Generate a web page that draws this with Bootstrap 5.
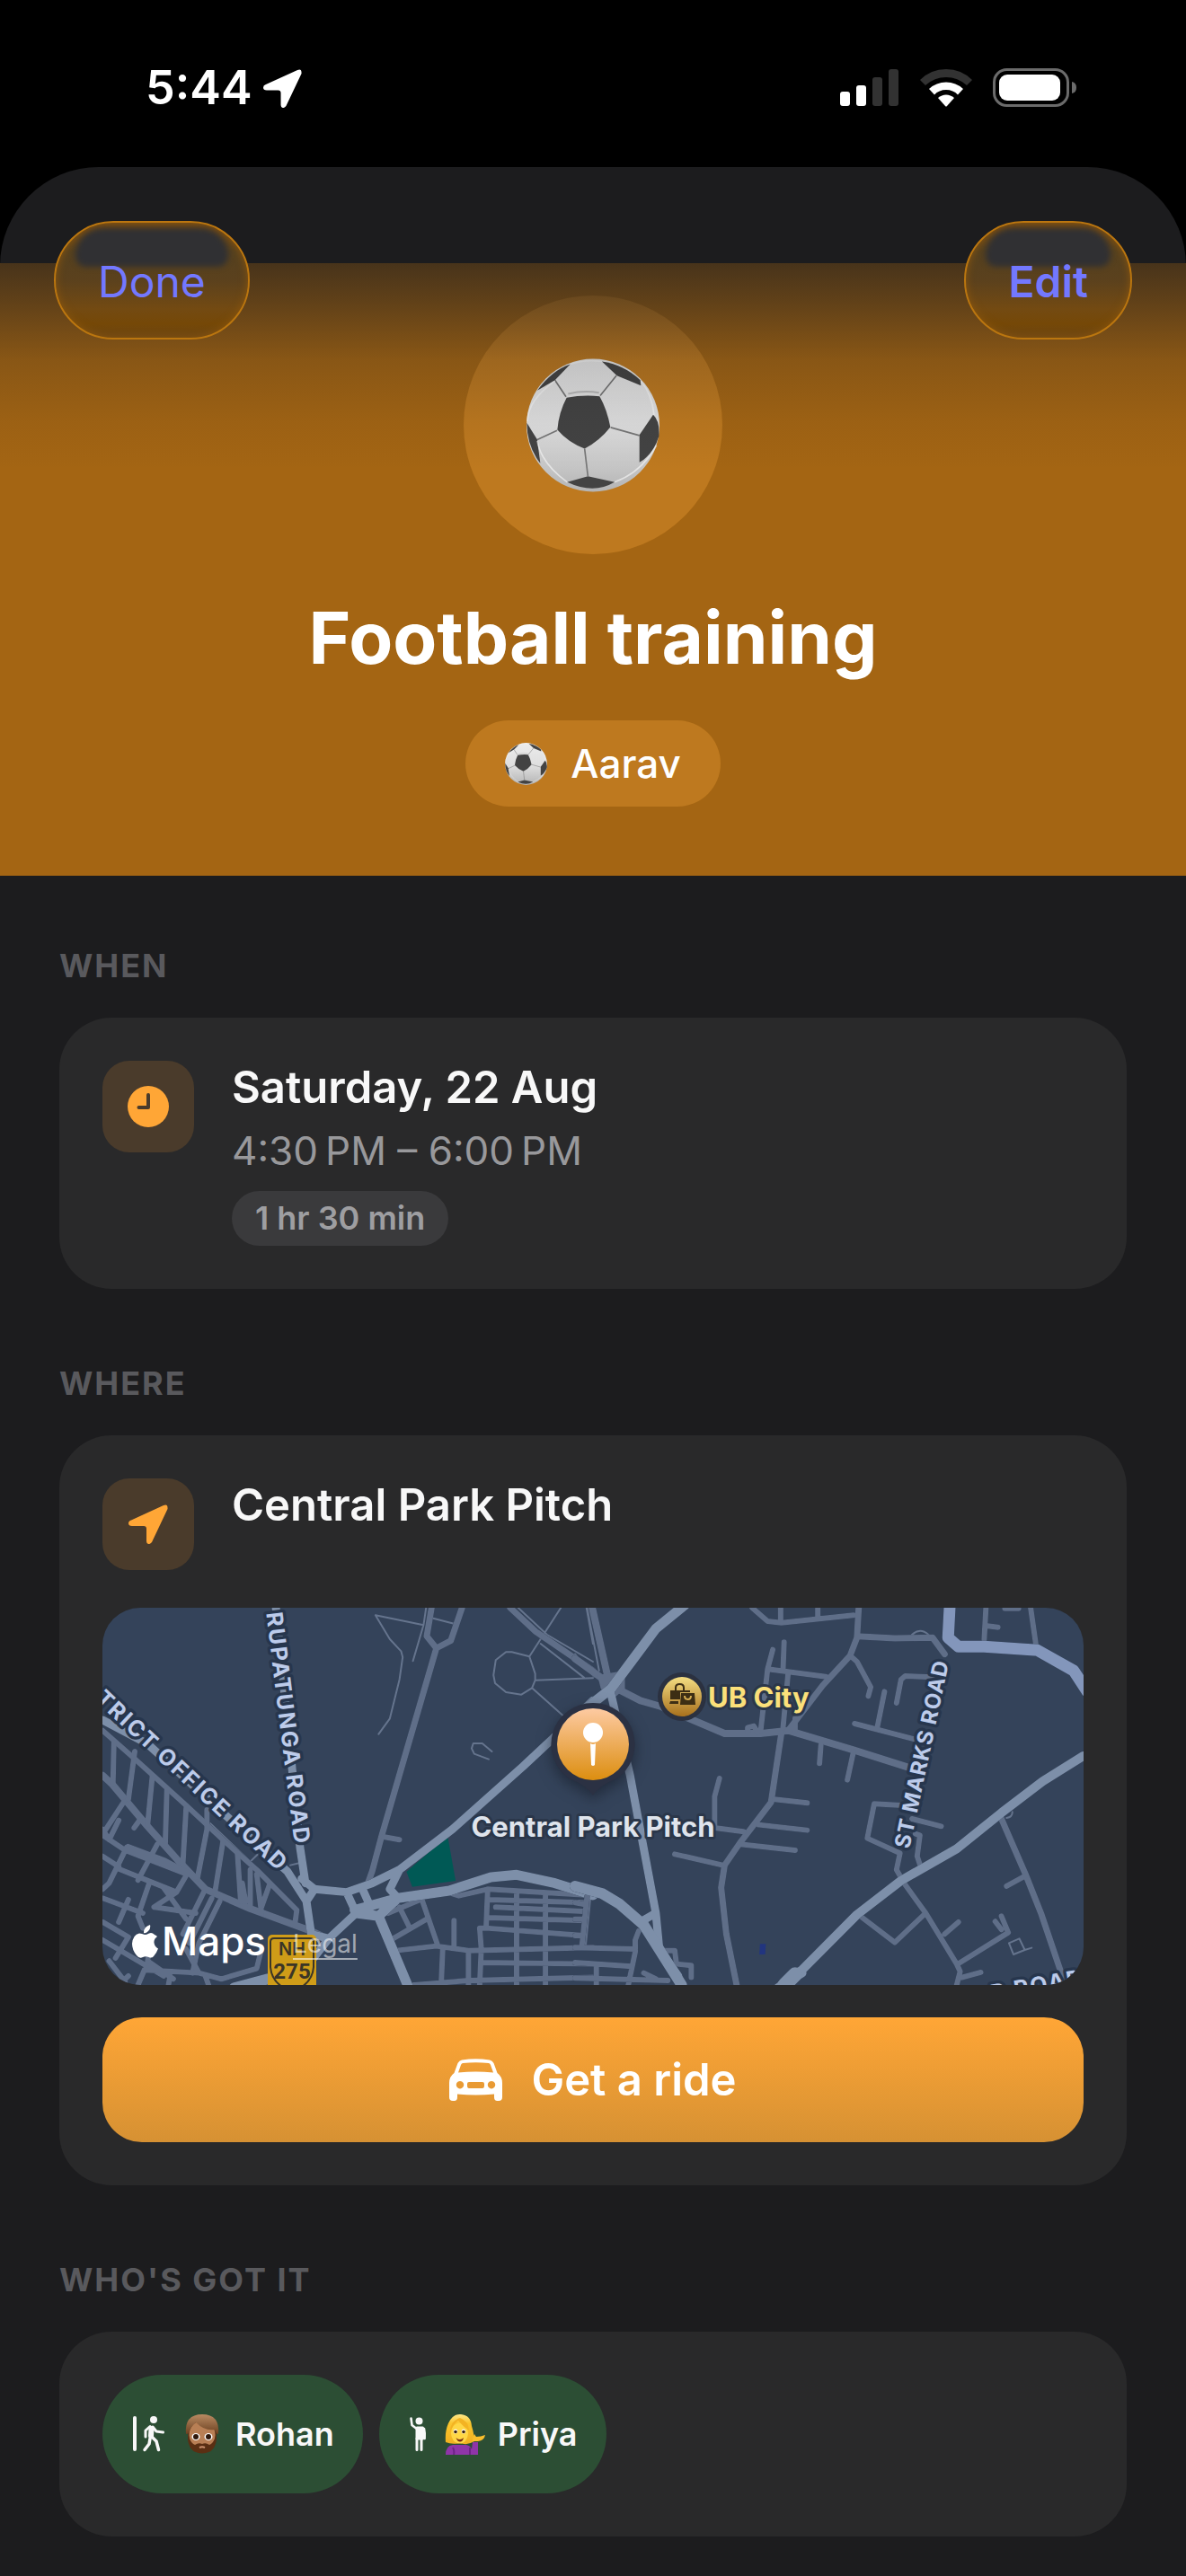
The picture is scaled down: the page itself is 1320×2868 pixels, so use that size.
<!DOCTYPE html>
<html lang="en" data-bs-theme="dark">
<head>
<meta charset="utf-8">
<meta name="viewport" content="width=device-width, initial-scale=1">
<title>Football training</title>
<link href="https://cdn.jsdelivr.net/npm/bootstrap@5.3.0/dist/css/bootstrap.min.css" rel="stylesheet">
<style>
  :root { --accent: #ffa636; --tint: #7378ff; }
  body { background: #000; font-family: Inter, "Liberation Sans", sans-serif; color: #f8f8f8; }
  svg { display: block; flex: none; }

  .status-bar { height: 186px; padding: 66px 121px 0 162px; color: #fff; }
  .status-time { font-size: 52px; line-height: 64px; font-weight: 600; gap: 12px; }
  .status-icons { height: 64px; gap: 23px; }

  .sheet { background: #1c1c1e; border-radius: 110px 110px 0 0; overflow: hidden; min-height: calc(100vh - 186px); }
  .sheet-bar { height: 107px; padding: 60px 60px 0; position: relative; z-index: 3; }
  .glass-btn { --bs-btn-color: var(--tint); --bs-btn-hover-color: var(--tint); --bs-btn-active-color: var(--tint);
    position: relative; overflow: hidden; height: 132px; padding: 18px 47px 0; display: flex; justify-content: center;
    border: 2px solid #bb760f; border-radius: 66px; font-size: 48px; line-height: 96px;
    background: linear-gradient(#6a4618 0, #54401f 25%, #5b411d 50%, #734a12 75%, #754807 88%, #6b4514 100%);
    box-shadow: inset 0 0 10px #8a560f; }
  .glass-btn::before { content: ""; position: absolute; top: 6px; left: 22px; right: 22px; height: 43px;
    background: #303033; border-radius: 36px 36px 14px 14px; filter: blur(3px); }
  .glass-btn span { position: relative; }

  .hero { position: relative; background: #a46513; padding: 36px 48px 77px; }
  .hero::after { content: ""; position: absolute; inset: 0 0 auto 0; height: 230px; pointer-events: none;
    background: linear-gradient(rgba(28,28,30,.68) 0, rgba(28,28,30,.5) 18%, rgba(28,28,30,.2) 47%, rgba(28,28,30,.06) 77%, rgba(28,28,30,0) 100%); }
  .hero-disc { width: 288px; height: 288px; background: #be791f; }
  .hero-title { font-size: 80px; line-height: 98px; font-weight: 700; color: #fff; margin: 44px 0 43px; }
  .hero-pill { height: 96px; padding: 0 44px; gap: 26px; background: #be791f; font-size: 44px; font-weight: 500; color: #fff; }

  .sheet-body { padding: 78px 66px 44px; }
  .group-label { font-size: 36px; line-height: 44px; font-weight: 700; letter-spacing: 2px; color: #59595d; margin: 0 0 36px; }
  .panel { background: #29292a; border-radius: 58px; padding: 48px; margin-bottom: 83px; }
  .panel:last-child { margin-bottom: 0; }
  .icon-tile { width: 102px; height: 102px; border-radius: 30px; background: #4a3b2b; flex: none; }
  .info-row { gap: 42px; }
  .info-title { font-size: 49px; line-height: 60px; font-weight: 600; margin: 0; }
  .info-sub { font-size: 44px; line-height: 56px; color: #98989b; margin: 12px 0 17px; }
  .time-badge { display: inline-block; height: 61px; line-height: 61px; padding: 0 26px; border-radius: 31px;
    background: #3a3a3c; color: #9e9ea1; font-size: 36px; font-weight: 600; vertical-align: top; }

  .map-box { position: relative; height: 420px; margin: 42px 0 36px; border-radius: 42px; overflow: hidden; background: #34435a; }
  .map-box > svg { width: 100%; height: 100%; }
  .map-brand { position: absolute; left: 33px; bottom: 21px; gap: 4px; color: #fff; font-size: 44px; line-height: 56px; font-weight: 500; }
  .map-legal { position: absolute; left: 212px; bottom: 26px; font-size: 28px; line-height: 40px; color: rgba(255,255,255,.55); text-underline-offset: 6px; }
  .map-legal:hover { color: #fff; }
  .streets path { fill: none; stroke-linejoin: round; stroke-linecap: round; vector-effect: non-scaling-stroke; }
  .minor path { stroke: #5f6e88; }
  .major path { stroke: #7d8fa9; }
  .trails path { stroke: #65748d; stroke-width: 2px; }
  .casing { filter: drop-shadow(0 0 1px #26344a); }
  .street-name { font-size: 25px; font-weight: 700; letter-spacing: 2px; fill: #bccbea; stroke: #27364d; stroke-width: 7px; paint-order: stroke; stroke-linejoin: round; }
  .street-name .side-street { font-size: 24px; letter-spacing: 1px; }
  .place-name { font-size: 31px; font-weight: 700; stroke: #2b374a; stroke-width: 6px; paint-order: stroke; stroke-linejoin: round; }

  .ride-btn { --bs-btn-color: #fff; --bs-btn-hover-color: #fff; --bs-btn-active-color: #fff; width: 100%; height: 139px; border: 0;
    border-radius: 44px; gap: 32px; font-size: 49px; font-weight: 600; background: linear-gradient(#ffa636, #d69133); }

  .people { gap: 18px; }
  .person { height: 132px; border-radius: 66px; background: #2c4e34; padding: 0 32px 0 34px; font-size: 36px; font-weight: 600; }
  .person-face { margin: 0 14px 0 20px; }
</style>
<script src="https://cdn.jsdelivr.net/npm/bootstrap@5.3.0/dist/js/bootstrap.bundle.min.js"></script>
</head>
<body>

<svg width="0" height="0" class="position-absolute" aria-hidden="true">
  <defs>
    <linearGradient id="leather" x1="0" y1="0" x2="0" y2="1"><stop offset="0" stop-color="#ececec"/><stop offset=".55" stop-color="#dedede"/><stop offset="1" stop-color="#b4b4b4"/></linearGradient>
    <symbol id="ball" viewBox="316 270 444 446">
      <circle cx="538" cy="493" r="222" fill="url(#leather)"/>
      <g fill="#434343">
        <path d="M450 401Q505 390 560 396Q585 440 596 499Q560 545 510 571Q455 550 419 508Q424 450 450 401Z"/>
        <path d="M462 289Q400 310 352 377L411 342Z"/>
        <path d="M568 280Q640 290 696 342L698 360L618 327Z"/>
        <path d="M739 458Q762 480 758 530Q740 590 693 617V525Z"/>
        <path d="M317 485L352 541L362 620Q318 565 317 485Z"/>
        <path d="M452 683L521 663L610 683Q540 725 452 683Z"/>
      </g>
      <path d="M411 342L448 398M562 394L616 327M597 500L693 527M510 571L521 663M418 510L352 541" fill="none" stroke="#777" stroke-width="5"/>
      <path d="M462 289Q510 272 568 280M411 345Q320 410 319 480M352 545Q365 620 452 683M610 683Q700 650 750 560M698 345Q735 390 742 458" fill="none" stroke="#fff" stroke-opacity=".55" stroke-width="5"/>
      <path d="M455 388Q505 376 558 384" fill="none" stroke="#bbb" stroke-width="6"/>
    </symbol>
    <symbol id="arrow" viewBox="0 0 44 44">
      <path d="M39 1Q44-1 43.500 5L26 42Q24 44.500 22 44Q20 43.500 20 41V27Q20 24 17 24H4Q0 24 0 21Q0 18.500 3 17.500Z"/>
    </symbol>
    <linearGradient id="pinfill" x1="0" y1="0" x2="0" y2="1"><stop offset="0" stop-color="#fdcaa2"/><stop offset="1" stop-color="#dc8e10"/></linearGradient>
    <linearGradient id="shopfill" x1="0" y1="0" x2="0" y2="1"><stop offset="0" stop-color="#f4dd82"/><stop offset="1" stop-color="#a8701c"/></linearGradient>
    <linearGradient id="hair" x1="0" y1="0" x2="0" y2="1"><stop offset="0" stop-color="#b98a62"/><stop offset="1" stop-color="#6b4020"/></linearGradient>
    <linearGradient id="blond" x1="0" y1="0" x2="0" y2="1"><stop offset="0" stop-color="#ffe98a"/><stop offset=".3" stop-color="#fbc52e"/><stop offset="1" stop-color="#f0b020"/></linearGradient>
  </defs>
</svg>

<header class="status-bar d-flex justify-content-between align-items-start">
  <div class="status-time d-flex align-items-center">
    <span>5:44</span>
    <svg width="43" height="43" fill="#fff" aria-hidden="true"><use href="#arrow"/></svg>
  </div>
  <div class="status-icons d-flex align-items-center">
    <svg width="66" height="42" viewBox="0 0 66 42" fill="#fff" aria-hidden="true">
      <rect y="25" width="11" height="16" rx="3"/><rect x="18" y="18" width="11" height="23" rx="3"/>
      <rect x="36" y="9" width="11" height="32" rx="3" fill="#323232"/><rect x="54" width="11" height="41" rx="3" fill="#323232"/>
    </svg>
    <svg width="58" height="42" viewBox="0 0 58 42" fill="#fff" aria-hidden="true">
      <path fill="#323232" d="M0 12Q12 0 29 0T58 12L52 18Q42 9 29 9T6 18Z"/>
      <path d="M10 22Q18 14.500 29 14.500T48 22L42 28.500Q37 23 29 23T16 28.500Z"/>
      <path d="M20 32Q24 28.500 29 28.500T38 32L30 41Q29 42 28 41Z"/>
    </svg>
    <svg width="94" height="44" viewBox="0 0 94 44" aria-hidden="true">
      <rect x="1.500" y="1.500" width="82" height="40" rx="14" fill="none" stroke="#6b6b6b" stroke-width="3"/>
      <rect x="7" y="7" width="68" height="29" rx="9" fill="#fff"/>
      <path d="M88 15Q93 16 93 21.500T88 28Z" fill="#6b6b6b"/>
    </svg>
  </div>
</header>

<main class="sheet">
  <nav class="sheet-bar d-flex justify-content-between align-items-start" aria-label="Event actions">
    <button type="button" class="btn glass-btn"><span>Done</span></button>
    <button type="button" class="btn glass-btn fw-semibold"><span>Edit</span></button>
  </nav>

  <section class="hero d-flex flex-column align-items-center">
    <div class="hero-disc rounded-circle d-flex align-items-center justify-content-center">
      <svg width="148" height="149" role="img" aria-label="Football"><use href="#ball"/></svg>
    </div>
    <h1 class="hero-title text-center">Football training</h1>
    <div class="hero-pill rounded-pill d-flex align-items-center">
      <svg width="47" height="47" aria-hidden="true"><use href="#ball"/></svg>
      <span>Aarav</span>
    </div>
  </section>

  <div class="sheet-body">
    <h2 class="group-label">WHEN</h2>
    <section class="panel">
      <div class="info-row d-flex">
        <div class="icon-tile d-flex align-items-center justify-content-center">
          <svg width="46" height="46" viewBox="0 0 46 46" aria-hidden="true">
            <circle cx="23" cy="23" r="23" fill="#ffa636"/>
            <path d="M23 10V24H12.500" fill="none" stroke="#4a3b2b" stroke-width="4" stroke-linecap="round" stroke-linejoin="round"/>
          </svg>
        </div>
        <div>
          <p class="info-title">Saturday, 22 Aug</p>
          <p class="info-sub">4:30&#8239;PM – 6:00&#8239;PM</p>
          <span class="time-badge">1 hr 30 min</span>
        </div>
      </div>
    </section>

    <h2 class="group-label">WHERE</h2>
    <section class="panel">
      <div class="info-row d-flex">
        <div class="icon-tile d-flex align-items-center justify-content-center">
          <svg width="44" height="44" fill="#ffa636" aria-hidden="true"><use href="#arrow"/></svg>
        </div>
        <p class="info-title">Central Park Pitch</p>
      </div>

      <div class="map-box">
        <svg viewBox="0 0 1092 420" preserveAspectRatio="xMidYMid slice" role="img" aria-label="Map of Central Park Pitch">
          <!-- west half -->
          <g class="streets" transform="translate(-14 -20) scale(.3571 .3333)">
            <g class="trails">
              <path d="M1040 118L890 85L935 165L970 205L975 225L965 300L935 430L900 482M1048 60L1040 118L1007 238M1070 95L1140 115"/>
              <path d="M1297 208H1315L1370 223L1388 280V302L1378 328L1345 350L1297 342L1263 312L1258 285L1265 235ZM1370 223L1468 60M1388 302L1568 295M1378 328L1480 425M1405 180L1540 293M1335 60L1425 150L1568 240"/>
              <path d="M1253 540L1223 513H1195L1190 530L1198 548L1243 566M375 780L500 908L522 885M625 920L655 912M1548 60L1568 180"/>
            </g>
            <g class="minor casing" stroke-width="6">
              <path d="M40 470L140 565L300 720L420 840L520 935L645 1070L640 1110"/>
              <path stroke-width="8" d="M40 620L70 650L180 790L280 910L360 1000L500 1065L690 1140L740 1165"/>
              <path d="M75 510L72 650M140 540L120 700M195 620L180 785M240 670L235 850M300 730L290 915M365 735V800L335 965M415 840L390 1010M460 880L470 1040M475 980L485 1040M500 935V1060M520 950L535 1080M560 985L530 1075"/>
              <path d="M40 820L110 870L290 945M105 710L50 800M90 770L60 835L40 800M155 770L138 795M115 860L60 980L40 1000M120 858L235 905L330 960M85 930L270 1010L300 955M40 890L90 925M210 850L150 970M40 1030L165 1080M185 980L150 1090L165 1130M230 995L300 1100M200 1060L330 1080M270 1010L200 1060M120 1035L90 1110M355 1010L290 1150M405 1040L340 1180L320 1280M380 1030L310 1180"/>
              <path d="M40 1110L120 1160L80 1230M40 1170L230 1290M190 1180L180 1240L260 1300M60 1240L110 1310M120 1290L90 1320M300 1200L340 1280L410 1300L520 1265L535 1200M360 1290L370 1320M170 1270L150 1320M250 1290L245 1320M340 1280L170 1270"/>
              <path stroke-width="7" d="M1065 60L1050 155L1080 195L1125 170L1160 60M1080 195L910 820L880 940L865 985M1310 60L1390 140L1568 270"/>
              <path d="M915 825L965 835M1130 1015L1150 1022L1240 1000L1555 1020M1240 1000L1235 1130H1215L1220 1200L1215 1320M1330 1010V1320M1420 1015V1320M1555 1025L1540 1190M1245 1035L1545 1045M1265 1060L1550 1075M1240 1095L1545 1105M1235 1130L1540 1155M955 1205L1080 1190L1180 1205L1568 1195M1100 1195L1095 1320M1180 1205V1320M1220 1245L1568 1250M1010 1320L1180 1305L1568 1295M1135 1105V1190M1035 1035L1085 1190M945 1165L1050 1100M965 1060L995 1125M1030 1035L930 1080"/>
            </g>
            <path d="M1115 822L1140 972L1005 992L987 942Z" style="fill:#005955"/>
            <g class="major casing" stroke-width="9">
              <path d="M580 60L655 860L672 980M40 435L180 515L425 755L615 940L675 1040L690 1150L745 1165M660 965L700 1000L675 1040"/>
              <path d="M700 1000L800 1010L880 980L965 935L1130 800L1350 590L1440 500L1568 370M800 1010L830 1080L745 1165L690 1240M965 935L935 1000L960 1030M850 1000L875 1060"/>
              <path stroke-width="11" d="M830 1080L900 1090L990 1320M900 1090L960 1030L1120 1005L1250 960L1330 952L1450 980L1568 1020M825 1070L960 1030"/>
              <path stroke-width="12" d="M450 1330L555 1300"/>
            </g>
          </g>
          <!-- east half -->
          <g class="streets" transform="translate(526 -20) scale(.3827 .3333)">
            <g class="trails">
              <path d="M35 60L70 270M0 215L55 290M980 150Q1003 125 1028 150M1262 1180L1292 1165L1308 1203L1275 1218ZM1308 1203L1328 1196M1255 762Q1272 760 1272 742"/>
            </g>
            <g class="minor casing" stroke-width="6">
              <path stroke-width="8" d="M50 60L95 290M0 230L90 305M130 335L190 370L250 390L435 480H540L620 470L810 535L975 595"/>
              <path stroke-width="7" d="M825 60L820 160L800 220L720 320L620 470M600 480L570 710L480 845L435 920L425 995L440 1150L470 1320M1240 765L1310 950L1355 1080L1420 1300M820 155L930 162L1040 160L1075 215"/>
              <path d="M515 60L560 105L600 110L810 85M598 60V110M706 60V95M575 200L560 265L730 290M608 175L605 265M560 265L540 470M620 275L605 460M800 220L820 240L860 325L853 355M1040 292L960 288L948 300L935 378M900 340L878 465M813 447L990 500M715 520L711 580M810 540L792 635M420 630L406 690V795L490 808M580 700L675 712M535 785L675 803M480 850L640 870M290 883L430 920M502 475V460L520 455L530 475M640 430V470"/>
              <path d="M950 720L870 715L850 830L945 880L935 935L960 985L1020 1080L1110 1250L1120 1275L1110 1320M980 765L1065 790M990 815L1003 820L995 890L1005 925M835 1095L930 1178L1015 1085M1075 1150L1115 1110M1120 1245L1260 1145L1240 1090M1240 1135L1222 1108M1125 1295L1180 1278M1310 955L1255 990M1195 60L1190 165M1195 120L1230 125M1325 60L1340 180M1250 62H1290"/>
              <path d="M0 1195L175 1200M35 1025L20 1190M185 1140L175 1170V1210L155 1320M0 1045L25 1050M0 1100H20M0 1155H20M0 1245L165 1258M62 1250V1320M0 1297L270 1305M200 1280L235 1300M250 1205H290L295 1250L338 1255V1295"/>
            </g>
            <path d="M65 285L145 270V330L110 365L75 330Z" style="fill:#5f6e88"/>
            <g class="major casing" stroke-width="9">
              <path stroke-width="11" d="M320 50L235 130L170 230L105 330L0 425"/>
              <path d="M105 350L160 620L235 1080L245 1200L300 1290M235 1080L190 1110"/>
              <path stroke-width="12" d="M0 990L80 1015L130 1050L200 1120L310 1320"/>
              <path stroke-width="10" d="M1478 555L1360 640L1240 745L1110 865L950 970L820 1085L660 1270L600 1320M660 1280L590 1330"/>
              <path stroke-width="16" d="M640 1285L610 1320"/>
              <path stroke-width="13" style="stroke:#8396bb" d="M1090 50L1085 160L1115 190H1190L1345 202L1450 270L1490 340"/>
            </g>
            <path d="M538 1183h17l-2 35h-17z" style="fill:#22357f"/>
          </g>

          <g class="street-name">
            <text transform="translate(214 265) rotate(83)" text-anchor="end">RUPATUNGA ROAD</text>
            <text transform="translate(197 295) rotate(43)" text-anchor="end">TRICT OFFICE ROAD</text>
            <text class="side-street" transform="translate(898 269) rotate(-78)">ST MARKS ROAD</text>
            <text transform="translate(990 438) rotate(-10)">R ROAD</text>
          </g>

          <rect x="184" y="364" width="54" height="60" rx="5" fill="#cf9c18"/>
          <path d="M191 368H231Q235 368 235 372V400Q234 414 222 422H200Q188 414 187 400V372Q187 368 191 368Z" fill="none" stroke="#3b3526" stroke-width="2"/>
          <text x="211" y="387" text-anchor="middle" font-size="20" font-weight="600" fill="#3b3526">NH</text>
          <text x="211" y="413" text-anchor="middle" font-size="24" font-weight="700" fill="#3b3526" font-family="Roboto, sans-serif">275</text>

          <circle cx="645" cy="99" r="27" fill="#2b3140"/>
          <circle cx="645" cy="99" r="22" fill="url(#shopfill)"/>
          <g fill="#3d2e14"><path d="M632 92H654V94H643V102H632ZM632 104H641V107H631Z"/><path d="M644 95H659L660 108H643Z"/></g>
          <path d="M638 92V89Q638 85 642.500 85T647 89V92" fill="none" stroke="#3d2e14" stroke-width="2"/>
          <path d="M648 98Q648 102 651.500 102T655 98" fill="none" stroke="#d3ab50" stroke-width="2"/>
          <text class="place-name" x="674" y="111" fill="#fbe07a">UB City</text>

          <g style="filter:drop-shadow(0 6px 8px rgba(20,26,38,.6))">
            <path d="M546 106A46 46 0 0 1 571 191Q553 198 546 209Q539 198 521 191A46 46 0 0 1 546 106Z" fill="#2b3143"/>
          </g>
          <circle cx="546" cy="152" r="40" fill="url(#pinfill)"/>
          <circle cx="546" cy="139" r="11" fill="#fff"/>
          <path d="M543 151Q546 153 549 151L548 175Q546 177 544 175Z" fill="#fff"/>
          <text class="place-name" x="546" y="255" text-anchor="middle" fill="#dfe4ec">Central Park Pitch</text>
        </svg>
        <div class="map-brand d-flex align-items-center">
          <svg width="29" height="37" viewBox="0 0 29 37" fill="#fff" aria-hidden="true">
            <path d="M20 0Q21 4 18 7T13 9Q13 5 15 3T20 0ZM14 11Q16 11 19 9.500T25 11Q27 12 28 13Q24 16 24.500 20T29 26.500Q27 32 24 35Q22 37.500 18.500 36T12 36Q8 38 5 34Q0 28 0 21Q1 11 8 9.500Q11 9.500 14 11Z"/>
          </svg>
          <span>Maps</span>
        </div>
        <a class="map-legal" href="#legal">Legal</a>
      </div>

      <button type="button" class="btn ride-btn d-flex align-items-center justify-content-center">
        <svg width="59" height="47" viewBox="0 0 59 47" aria-hidden="true">
          <path fill="#fff" fill-rule="evenodd" d="M14 1.500Q29.500-1 45 1.500Q48 2 49.500 5L53.500 16Q59 20 59 27V43Q59 47 55 47H53.500Q50 47 50 43V39.500Q29.500 41.500 9 39.500V43Q9 47 5.500 47H4Q0 47 0 43V27Q0 20 5.500 16L9.500 5Q11 2 14 1.500ZM15 5Q13.500 5.500 13 7L10 15.500Q29.500 13.500 49 15.500L46 7Q45.500 5.500 44 5Q29.500 3.500 15 5ZM12 25A4.200 4.200 0 1 0 12.010 25ZM47 25A4.200 4.200 0 1 0 47.010 25ZM22 26Q20 26 20 28V30Q20 33 22 33H37Q39 33 39 30V28Q39 26 37 26Z"/>
        </svg>
        <span>Get a ride</span>
      </button>
    </section>

    <h2 class="group-label">WHO'S GOT IT</h2>
    <section class="panel">
      <ul class="people list-unstyled d-flex flex-wrap mb-0">
        <li class="person d-flex align-items-center">
          <svg width="35" height="40" viewBox="0 0 35 40" fill="none" stroke="#f8f8f8" stroke-linecap="round" stroke-linejoin="round" aria-hidden="true">
            <path stroke-width="4" d="M2 2V37"/>
            <circle cx="23" cy="4" r="4" fill="#f8f8f8" stroke="none"/>
            <path stroke-width="6" d="M20.500 14L20 22"/>
            <path stroke-width="3" d="M19 11.500L14 16V23M22 12L26 17L33.500 18"/>
            <path stroke-width="3.500" d="M21 23L26 28L28.500 37.500M19 25L18 31L13 37.500"/>
          </svg>
          <svg class="person-face" width="45" height="44" viewBox="0 0 45 44" aria-hidden="true">
            <path d="M22 2Q38 2 38 17V28Q37 40 22 43Q7 40 6 28V17Q6 2 22 2Z" fill="#5a3016"/>
            <ellipse cx="22" cy="23" rx="14.500" ry="16" fill="#b87f55"/>
            <path d="M7 24Q9 32 14 34Q18 31 22 33Q26 31 30 34Q35 32 37 24Q39 43 22 43.500Q5 43 7 24Z" fill="#5a2f13"/>
            <path d="M4 22Q2 0 22 0Q42 0 40 22Q37 22 36 17Q25 19 15 9Q9 14 8 19Q7 22 4 22Z" fill="url(#hair)"/>
            <ellipse cx="15" cy="25" rx="4.500" ry="4" fill="#fff"/><ellipse cx="29" cy="25" rx="4.500" ry="4" fill="#fff"/>
            <circle cx="15" cy="25" r="3" fill="#2e170b"/><circle cx="29" cy="25" r="3" fill="#2e170b"/>
            <path d="M19 37Q22 35.500 25 37" fill="none" stroke="#c98f6c" stroke-width="2"/>
          </svg>
          <span>Rohan</span>
        </li>
        <li class="person d-flex align-items-center">
          <svg width="19" height="38" viewBox="0 0 19 38" fill="none" stroke="#f8f8f8" stroke-linecap="round" stroke-linejoin="round" aria-hidden="true">
            <circle cx="10.500" cy="4.500" r="4" fill="#f8f8f8" stroke="none"/>
            <path stroke-width="2.600" d="M1.500 1.500L2.500 9L7 12.500M16 13Q17 17 16.600 24"/>
            <path fill="#f8f8f8" stroke-width="3" d="M8 12H14.500V24H8Z"/>
            <path stroke-width="3" d="M8 24V36.500M13 24V36.500"/>
          </svg>
          <svg class="person-face" width="45" height="46" viewBox="0 0 45 46" aria-hidden="true">
            <path d="M1 46Q1 36 9 35H24Q29 36 30 40L31 32H37V46Z" fill="#8f35a8"/>
            <path d="M10 46Q11 41 9 38M28 46V38" stroke="#6d2386" stroke-width="2" fill="none"/>
            <path d="M1 32Q0 20 4 11Q9 0 18 1Q29 2 30 14Q33 24 33 31Q25 36 17 33Q8 35 1 32Z" fill="url(#blond)"/>
            <ellipse cx="16.500" cy="22" rx="9.500" ry="11.500" fill="#ffd746"/>
            <path d="M6 22Q8 13 15 8Q22 16 27 19Q27 9 17 5Q5 9 6 22Z" fill="#f3b323"/>
            <ellipse cx="12" cy="20" rx="2.300" ry="2.600" fill="#fff"/><ellipse cx="21" cy="20" rx="2.300" ry="2.600" fill="#fff"/>
            <circle cx="12" cy="20.500" r="1.800" fill="#3d220c"/><circle cx="21" cy="20.500" r="1.800" fill="#3d220c"/>
            <path d="M12.500 27Q17 31 21 27Q20 31.500 17 31.500T12.500 27Z" fill="#7b3013"/>
            <path d="M31 31Q31 26 33 23L35 26Q40 26 45 24Q44 30 37 31Z" fill="#fbbf2c"/>
          </svg>
          <span>Priya</span>
        </li>
      </ul>
    </section>
  </div>
</main>
</body>
</html>
